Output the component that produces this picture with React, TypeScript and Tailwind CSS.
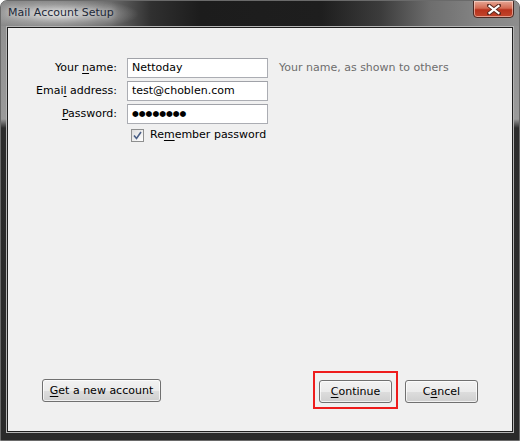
import React from 'react';

const FONT = "font-['DejaVu_Sans',sans-serif]";

function WinButton({ children, width }: { children: React.ReactNode; width: string }) {
  return (
    <button
      className={`${width} h-[23px] rounded-[3px] border border-[#707070] bg-[linear-gradient(to_bottom,#f2f2f2_0%,#ebebeb_50%,#dddddd_51%,#cfcfcf_100%)] text-[11px] leading-[21px] text-black shadow-[inset_0_0_0_1px_rgba(255,255,255,0.7)]`}
    >
      {children}
    </button>
  );
}

function Field({ label, value }: { label: React.ReactNode; value: React.ReactNode }) {
  return (
    <div className="flex items-center h-[20px] mb-[3px]">
      <div className="w-[110px] text-right text-[11px] leading-[20px] text-black pr-[1px]">{label}</div>
      <div className="ml-[9px] w-[141px] h-[20px] border border-[#abadb3] border-t-[#a0a2a8] bg-white pl-[4px] text-[11px] leading-[18px] text-black">
        {value}
      </div>
    </div>
  );
}

export default function App() {
  return (
    <div
      className={`${FONT} w-[520px] h-[441px] flex flex-col rounded-t-[7px] overflow-hidden border border-[#6a6a6a] bg-[linear-gradient(to_bottom,#8e8e8e_0px,#9a9a9a_118px,#2c2c2c_127px,#2a2a2a_100%)]`}
    >
      {/* title bar */}
      <div className="relative h-[25px] shrink-0 flex items-center pl-[7px] bg-[radial-gradient(ellipse_80px_16px_at_58px_13px,rgba(225,225,225,0.95),rgba(200,200,200,0.4)_60%,transparent_100%),linear-gradient(to_right,#8a8a8a_0px,#6a6a6a_110px,#303030_150px,#1c1c1c_200px,#1e1e1e_320px,#3c3c3c_380px,#6e6e6e_430px,#858585_480px,#8e8e8e_520px)]">
        <span className="text-[11px] text-[#1c2838] [text-shadow:0_0_6px_rgba(255,255,255,0.9)]">Mail Account Setup</span>
        <div className="absolute right-[5px] top-[-1px] w-[41px] h-[18px] rounded-b-[4px] border border-[#4a2a24] bg-[linear-gradient(to_bottom,#e5a795_0%,#d36a52_45%,#b8321c_55%,#c2452c_100%)] shadow-[inset_0_0_0_1px_rgba(255,230,220,0.55)] flex items-center justify-center">
          <svg width="14" height="11" viewBox="0 0 14 11">
            <path d="M2 1.5 L12 9.5 M12 1.5 L2 9.5" stroke="#5a2a20" strokeWidth="4" strokeLinecap="square" />
            <path d="M2.5 2 L11.5 9 M11.5 2 L2.5 9" stroke="#ffffff" strokeWidth="2.2" strokeLinecap="square" />
          </svg>
        </div>
      </div>

      {/* client area */}
      <div className="flex-1 mt-[1px] ml-[6px] mr-[6px] mb-[8px] border border-[#1e1e1e] outline outline-1 outline-[#b4b4b4] bg-[#f0f0f0] flex flex-col">
        <div className="pt-[30px]">
          <div className="flex items-center">
            <Field
              label={
                <>
                  Your <span className="underline underline-offset-2">n</span>ame:
                </>
              }
              value="Nettoday"
            />
            <span className="ml-[11px] mb-[3px] text-[11px] text-[#6d6d6d]">Your name, as shown to others</span>
          </div>
          <Field
            label={
              <>
                Emai<span className="underline underline-offset-2">l</span> address:
              </>
            }
            value="test@choblen.com"
          />
          <Field
            label={
              <>
                <span className="underline underline-offset-2">P</span>assword:
              </>
            }
            value={<span className="text-[7.8px] leading-[18px] align-top">●●●●●●●●</span>}
          />
          <div className="flex items-center mt-[4px] ml-[123px]">
            <div className="w-[13px] h-[13px] border border-[#8e8f8f] bg-[linear-gradient(135deg,#dcdcdc,#ffffff)] flex items-center justify-center">
              <svg width="9" height="9" viewBox="0 0 9 9">
                <path d="M1 4.5 L3.5 7.5 L8 1" fill="none" stroke="#4a5f86" strokeWidth="1.6" />
              </svg>
            </div>
            <span className="ml-[6px] text-[11px] text-black leading-[14px]">
              Re<span className="underline underline-offset-2">m</span>ember password
            </span>
          </div>
        </div>

        <div className="mt-auto mb-[22px] flex items-center pl-[34px] pr-[34px]">
          <WinButton width="w-[119px]">
            <span className="underline underline-offset-2">G</span>et a new account
          </WinButton>
          <div className="ml-auto border-2 border-[#ee1c1c] px-[4px] pt-[5px] pb-[4px]">
            <WinButton width="w-[73px]">
              <span className="underline underline-offset-2">C</span>ontinue
            </WinButton>
          </div>
          <div className="ml-[7px]">
            <WinButton width="w-[73px]">
              C<span className="underline underline-offset-2">a</span>ncel
            </WinButton>
          </div>
        </div>
      </div>
    </div>
  );
}
